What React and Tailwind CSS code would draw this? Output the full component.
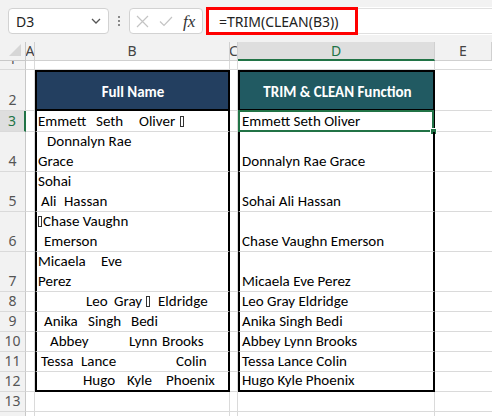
import React from "react";

const CELLFONT = "font-['Carlito','Lato','Liberation_Sans',sans-serif]";
const UIFONT = "font-['Noto_Sans','Open_Sans',sans-serif]";

function Box({ cls }) {
  return <span className={`inline-block w-[4px] h-[11px] border border-[#333] align-[-1px] ${cls || ""}`} />;
}

function RowHdr({ h, n, sel }) {
  return (
    <div
      className={`w-[26px] shrink-0 ${h} flex items-end justify-center overflow-hidden border-b border-b-[#dadada] ${
        sel
          ? "bg-[#dedede] border-r-2 border-r-[#217346] text-[#217346]"
          : "bg-[#f2f2f2] border-r border-r-[#c8c8c8] text-[#555]"
      } ${UIFONT} text-[14px] leading-[20px]`}
    >
      <span className="block">{n}</span>
    </div>
  );
}

function Row({ h, n, sel, b, d, bCls = "", dCls = "", table = true, dOverlay }) {
  return (
    <div className={`flex ${h}`}>
      <RowHdr h={h} n={n} sel={sel} />
      <div className="w-[9px] shrink-0 border-r border-b border-[#dadada]" />
      <div
        className={`w-[195px] shrink-0 flex flex-col justify-end overflow-hidden pl-[1px] ${CELLFONT} text-[15px] leading-[20px] text-black whitespace-pre ${
          table
            ? "border-l-2 border-l-black border-r-2 border-r-black border-b border-b-[#dadada]"
            : "border-r border-b border-[#dadada]"
        } ${bCls}`}
      >
        {b}
      </div>
      <div className="w-[8px] shrink-0 border-r border-b border-[#dadada]" />
      <div
        className={`relative w-[197px] shrink-0 flex flex-col justify-end pl-[2px] ${CELLFONT} text-[15px] leading-[20px] text-black whitespace-pre ${
          table
            ? "border-l-2 border-l-black border-r-2 border-r-black border-b border-b-[#dadada]"
            : "border-r border-b border-[#dadada]"
        } ${dCls}`}
      >
        {d}
        {dOverlay}
      </div>
      <div className="flex-1 border-b border-[#dadada]" />
    </div>
  );
}

function Toolbar() {
  return (
    <div className={`h-[42px] bg-[#f2f2f2] flex items-start ${UIFONT}`}>
      <div className="ml-[8px] mt-[8px] w-[101px] h-[26px] bg-white border border-[#d2d2d2] rounded-[4px] flex items-center justify-between pl-[7px] pr-[7px]">
        <span className="text-[14px] text-[#222]">D3</span>
        <svg width="10" height="6" viewBox="0 0 10 6">
          <path d="M1 1 L5 5 L9 1" fill="none" stroke="#555" strokeWidth="1.3" />
        </svg>
      </div>
      <div className="ml-[9px] mt-[16px] flex flex-col gap-[2px]">
        <span className="w-[2px] h-[2px] bg-[#8a8a8a]" />
        <span className="w-[2px] h-[2px] bg-[#8a8a8a]" />
        <span className="w-[2px] h-[2px] bg-[#8a8a8a]" />
      </div>
      <div className="ml-[9px] mt-[8px] w-[74px] h-[26px] bg-white border border-[#d2d2d2] rounded-[4px] flex items-center pl-[6px]">
        <svg width="13" height="13" viewBox="0 0 13 13">
          <path d="M1 1 L12 12 M12 1 L1 12" stroke="#c4c4c4" strokeWidth="1.2" />
        </svg>
        <svg className="ml-[10px]" width="14" height="11" viewBox="0 0 14 11">
          <path d="M1 5.5 L5 9.5 L13 1" fill="none" stroke="#c4c4c4" strokeWidth="1.2" />
        </svg>
        <span className="ml-[10px] font-['Liberation_Serif',serif] italic text-[17px] leading-none text-[#333]">
          fx
        </span>
      </div>
      <div className="ml-[3px] mt-[7px] flex-1 h-[28px] bg-white flex">
        <div className="w-[152px] h-[28px] border-[3px] border-[#ff0000] flex items-center pl-[10px] text-[14px] text-[#222] whitespace-nowrap">
          =TRIM(CLEAN(B3))
        </div>
        <div className="flex-1 border-y border-[#e0e0e0] mt-[1px] h-[26px]" />
      </div>
    </div>
  );
}

function ColHeader() {
  const base = `h-[19px] shrink-0 flex items-center justify-center overflow-hidden border-b border-r ${UIFONT} text-[14px] leading-none`;
  return (
    <div className="flex">
      <div className="w-[26px] h-[19px] shrink-0 bg-[#f2f2f2] border-r border-r-[#c8c8c8] border-b border-b-[#c8c8c8] flex items-end justify-end pr-[4px] pb-[4px]">
        <svg width="12" height="12" viewBox="0 0 12 12">
          <path d="M12 0 L12 12 L0 12 Z" fill="#d6d6d6" />
        </svg>
      </div>
      <div className={`${base} w-[9px] bg-[#f2f2f2] border-[#d0d0d0] text-[#444]`}>A</div>
      <div className={`${base} w-[195px] bg-[#f2f2f2] border-[#d0d0d0] text-[#444]`}>B</div>
      <div className={`${base} w-[8px] bg-[#f2f2f2] border-[#d0d0d0] text-[#444]`}>C</div>
      <div className={`h-[19px] shrink-0 flex items-center justify-center w-[197px] bg-[#dedede] border-r border-r-[#d0d0d0] border-b-2 border-b-[#217346] text-[#217346] ${UIFONT} text-[14px] leading-none`}>
        D
      </div>
      <div className={`${base} flex-1 bg-[#f2f2f2] border-[#d0d0d0] text-[#444]`}>E</div>
    </div>
  );
}

export default function App() {
  const hdr = "items-center justify-center font-bold text-white text-center";
  return (
    <div className="w-[492px] h-[416px] overflow-hidden bg-white">
      <Toolbar />
      <ColHeader />
      <Row h="h-[9px]" n="1" table={false} />
      <Row
        h="h-[41px]"
        n="2"
        b={<span className="block text-center font-bold text-white">Full Name</span>}
        d={<span className="block text-center font-bold text-white">TRIM &amp; CLEAN Function</span>}
        bCls="!justify-center border-t-2 border-t-black !border-b-2 !border-b-black bg-[#233f60] pt-[2px]"
        dCls="!justify-center border-t-2 border-t-black !border-b-2 !border-b-black bg-[#215a62] pt-[2px]"
      />
      <Row
        h="h-[21px]"
        n="3"
        sel
        b={
          <div className="flex items-center">
            <span className="inline-block w-[58px]">Emmett</span>
            <span className="inline-block w-[43px]">Seth</span>
            <span className="inline-block w-[41px]">Oliver</span>
            <Box />
          </div>
        }
        d={<span>Emmett Seth Oliver</span>}
        dOverlay={
          <>
            <div className="absolute -top-[1px] -left-[2px] -right-[1px] bottom-[-1px] border-2 border-[#217346]" />
            <div className="absolute -right-[4px] -bottom-[4px] w-[7px] h-[7px] bg-[#217346] border border-white" />
          </>
        }
      />
      <Row
        h="h-[40px]"
        n="4"
        b={
          <>
            <div className="pl-[9px]">Donnalyn Rae</div>
            <div>Grace</div>
          </>
        }
        d={<span>Donnalyn Rae Grace</span>}
      />
      <Row
        h="h-[40px]"
        n="5"
        b={
          <>
            <div>Sohai</div>
            <div className="flex pl-[3px]">
              <span className="inline-block w-[23px]">Ali</span>
              <span>Hassan</span>
            </div>
          </>
        }
        d={<span>Sohai Ali Hassan</span>}
      />
      <Row
        h="h-[40px]"
        n="6"
        b={
          <>
            <div className="flex items-center">
              <Box cls="mr-[1px]" />
              <span>Chase Vaughn</span>
            </div>
            <div className="pl-[6px]">Emerson</div>
          </>
        }
        d={<span>Chase Vaughn Emerson</span>}
      />
      <Row
        h="h-[40px]"
        n="7"
        b={
          <>
            <div className="flex">
              <span className="inline-block w-[63px]">Micaela</span>
              <span>Eve</span>
            </div>
            <div>Perez</div>
          </>
        }
        d={<span>Micaela Eve Perez</span>}
      />
      <Row
        h="h-[20px]"
        n="8"
        b={
          <div className="flex items-center pl-[48px]">
            <span className="inline-block w-[28px]">Leo</span>
            <span className="inline-block w-[32px]">Gray</span>
            <Box cls="mr-[8px]" />
            <span>Eldridge</span>
          </div>
        }
        d={<span>Leo Gray Eldridge</span>}
      />
      <Row
        h="h-[20px]"
        n="9"
        b={
          <div className="flex pl-[6px]">
            <span className="inline-block w-[44px]">Anika</span>
            <span className="inline-block w-[43px]">Singh</span>
            <span>Bedi</span>
          </div>
        }
        d={<span>Anika Singh Bedi</span>}
      />
      <Row
        h="h-[20px]"
        n="10"
        b={
          <div className="flex pl-[12px]">
            <span className="inline-block w-[79px]">Abbey</span>
            <span className="inline-block w-[33px]">Lynn</span>
            <span>Brooks</span>
          </div>
        }
        d={<span>Abbey Lynn Brooks</span>}
      />
      <Row
        h="h-[20px]"
        n="11"
        b={
          <div className="flex pl-[3px]">
            <span className="inline-block w-[40px]">Tessa</span>
            <span className="inline-block w-[95px]">Lance</span>
            <span>Colin</span>
          </div>
        }
        d={<span>Tessa Lance Colin</span>}
      />
      <Row
        h="h-[20px]"
        n="12"
        b={
          <div className="flex pl-[45px]">
            <span className="inline-block w-[44px]">Hugo</span>
            <span className="inline-block w-[39px]">Kyle</span>
            <span>Phoenix</span>
          </div>
        }
        d={<span>Hugo Kyle Phoenix</span>}
        bCls="!border-b-2 !border-b-black"
        dCls="!border-b-2 !border-b-black"
      />
      <Row h="h-[20px]" n="13" table={false} />
      <Row h="h-[20px]" n="14" table={false} />
    </div>
  );
}
